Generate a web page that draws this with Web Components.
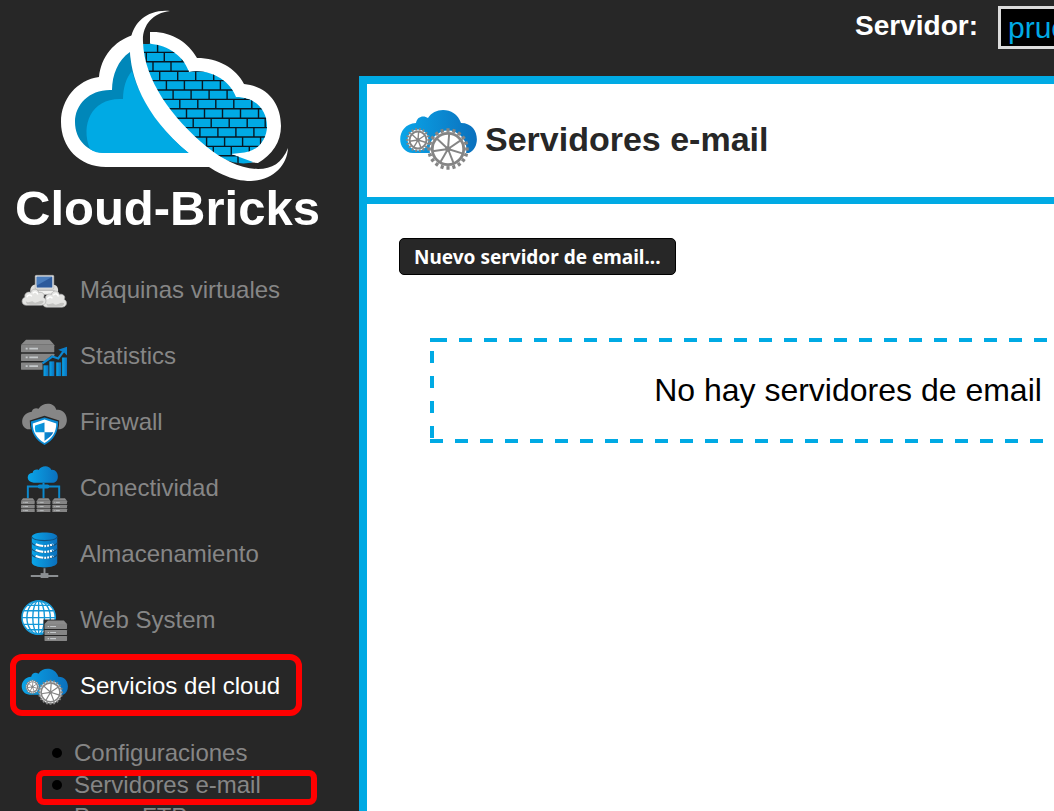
<!DOCTYPE html>
<html lang="es">
<head>
<meta charset="utf-8">
<title>Cloud-Bricks</title>
<style>
  html, body { margin: 0; height: 100%; }
  body { overflow: hidden; background: #272727; font-family: "Liberation Sans", Arial, sans-serif; }
</style>
</head>
<body>
<cb-app>
  <cb-sidebar slot="side">
    <cb-nav-item icon="vm">Máquinas virtuales</cb-nav-item>
    <cb-nav-item icon="stats">Statistics</cb-nav-item>
    <cb-nav-item icon="firewall">Firewall</cb-nav-item>
    <cb-nav-item icon="net">Conectividad</cb-nav-item>
    <cb-nav-item icon="storage">Almacenamiento</cb-nav-item>
    <cb-nav-item icon="web">Web System</cb-nav-item>
    <cb-nav-item icon="services" active>Servicios del cloud</cb-nav-item>
    <cb-sub-item slot="sub">Configuraciones</cb-sub-item>
    <cb-sub-item slot="sub" marked>Servidores e-mail</cb-sub-item>
    <cb-sub-item slot="sub">Proxy FTP</cb-sub-item>
  </cb-sidebar>
  <cb-server-bar slot="top"></cb-server-bar>
  <cb-panel slot="main">
    <span slot="title">Servidores e-mail</span>
    <cb-button>Nuevo servidor de email...</cb-button>
    <cb-empty>No hay servidores de email</cb-empty>
  </cb-panel>
</cb-app>

<script>
const gear = (cx, cy, r, teeth, spokes, color, sw) => {
  let s = `<circle cx="${cx}" cy="${cy}" r="${r}" fill="#fff"/><g stroke="${color}" fill="none">`;
  s += `<circle cx="${cx}" cy="${cy}" r="${r - sw}" stroke-width="${sw}"/>`;
  const ray = (a, r1, r2, w) =>
    `<path stroke-width="${w}" d="M${(cx + r1 * Math.cos(a)).toFixed(2)} ${(cy + r1 * Math.sin(a)).toFixed(2)}L${(cx + r2 * Math.cos(a)).toFixed(2)} ${(cy + r2 * Math.sin(a)).toFixed(2)}"/>`;
  for (let i = 0; i < teeth; i++) s += ray(i * 2 * Math.PI / teeth, r - sw / 2, r + sw * 0.8, r * 0.17);
  for (let i = 0; i < spokes; i++) s += ray(0.3 + i * 2 * Math.PI / spokes, 0, r - sw, sw * 0.7);
  return s + `</g><circle cx="${cx}" cy="${cy}" r="${sw}" fill="${color}"/>`;
};

const blueGrad = `<defs><linearGradient id="b" x1="0" x2="1"><stop offset="0" stop-color="#0aa5e8"/><stop offset="1" stop-color="#0b70bd"/></linearGradient></defs>`;

const rack = (x, y, w, h) => {
  const rh = (h * 0.84) / 3, top = y + h * 0.16;
  let s = `<path d="M${x} ${top}L${x + w * 0.15} ${y}H${x + w * 0.86}L${x + w} ${top}Z" fill="#8b8b8b"/>`;
  for (let i = 0; i < 3; i++) {
    s += `<rect x="${x}" y="${top + i * rh}" width="${w}" height="${rh * 0.84}" rx=".5" fill="#858585"/>`;
    s += `<path d="M${x + w * 0.14} ${top + (i + 0.42) * rh}h${w * 0.06}m${w * 0.05} 0h${w * 0.26}" stroke="#c4c8ca" stroke-width="${rh * 0.2}"/>`;
  }
  return s;
};

const puff = (x, y) => `<g transform="translate(${x} ${y})"><path d="M4 17C-1 17-1 10 3 9C2 4 7 3 9 4C10-1 17 0 17 4C21 3 24 6 22 9C26 11 25 17 20 17Z" fill="#e4e4e2" stroke="#aaa" stroke-width=".7"/><path d="M4 13C7 16 10 11 12 14C15 16 18 11 22 13C22 16 19 16.500 12 16.500C8 16.500 4 17 4 13Z" fill="#c3c3c1"/><path d="M5 9c1-3 4-3 5-1m1-3c2-3 5-1 5 1" stroke="#fff" fill="none" stroke-width="1.500"/></g>`;

const ICONS = {
  vm: `<svg viewBox="0 0 48 48"><path d="M10 28C8 21 12 17 16 18H33C38 18 39 24 37 28Z" fill="#dededc"/><rect x="14.500" y="8.500" width="19" height="14" rx="1" fill="#e9e9e7" stroke="#aaa" stroke-width=".6"/><rect x="16" y="10" width="16" height="11" fill="#2c5a9c"/><path d="M16 10H32L16 19Z" fill="#4a7dbd"/><path d="M13 24H34L37 28H12Z" fill="#f1f1ef" stroke="#999" stroke-width=".5"/>${puff(22, 24)}${puff(1, 22)}</svg>`,
  stats: `<svg viewBox="0 0 48 48">${blueGrad}${rack(0, 7, 34, 32)}<path d="M22 43V31L31 23L38 26L46 15V43Z" fill="#272727"/><g fill="url(#b)"><rect x="23" y="33" width="5" height="11"/><rect x="29" y="29" width="5" height="15"/><rect x="36" y="30" width="5" height="14"/><rect x="42" y="25" width="5" height="19"/></g><path d="M22 31L32 24L38 26L44 18" stroke="#0c88d2" stroke-width="2.200" fill="none"/><path d="M38 17L47 14V23L44 20Z" fill="#0c7fca"/></svg>`,
  firewall: `<svg viewBox="0 0 48 48">${blueGrad}<path d="M8 31C-2 30-1 14 11 13C12 9 16 9 18 10C22 3 34 3 36 11C48 9 51 28 40 31Z" fill="#868686"/><path d="M24 17L39 22C39 36 34 43 24 48C14 43 9 36 9 22Z" fill="#272727"/><path d="M24 19L38 23C38 35 33 42 24 47C15 42 10 35 10 23Z" fill="#0c8bd4"/><path d="M24 21L36 25C36 34 32 40 24 45C16 40 12 34 12 25Z" fill="#fff"/><path d="M24 24V34H15C14 31 14 29 14.500 27Z M24 34H33C32 37 28 40 24 43Z" fill="url(#b)"/></svg>`,
  net: `<svg viewBox="0 0 48 48">${blueGrad}<path d="M13 18C5 18 5 8 12 8C12 5 16 4 18 5C21 0 29 0 31 5C39 4 40 18 33 18Z" fill="url(#b)"/><path d="M23 18V34M7 34V22H39V34" stroke="#0c89cd" stroke-width="2" fill="none"/><rect x="17" y="20" width="12" height="4" rx="2" fill="#0b86ca"/>${rack(0, 34, 14, 15)}${rack(16, 34, 14, 15)}${rack(32, 34, 15, 15)}</svg>`,
  storage: `<svg viewBox="0 0 48 48">${blueGrad}<path d="M11 6C11 0 37 0 37 6V32C37 39 11 39 11 32Z" fill="url(#b)"/><path d="M11 6C13 11 35 11 37 6M11 12C13 17 35 17 37 12M11 18C13 23 35 23 37 18M11 24C13 29 35 29 37 24" stroke="#12517e" stroke-width="1.200" fill="none"/><path d="M15 13.500C21 16 27 16 33 13.500M15 19.500C21 22 27 22 33 19.500M15 25.500C21 28 27 28 33 25.500" stroke="#fff" stroke-width="2.200" fill="none" stroke-dasharray="8 1 2 1 2 1 2 1"/><path d="M24 38V44M10 46H38" stroke="#8b8f92" stroke-width="2"/><rect x="20" y="43" width="8" height="5" fill="#8b8f92"/></svg>`,
  web: `<svg viewBox="0 0 48 48"><circle cx="18" cy="21" r="17" fill="#fff" stroke="#1a9fdd" stroke-width="1.600"/><g stroke="#1598d8" stroke-width="1.400" fill="none"><ellipse cx="18" cy="21" rx="6" ry="17"/><ellipse cx="18" cy="21" rx="12" ry="17"/><path d="M18 4V38M1 21H35M3 14H33M3 28H33M7 8.500H29M7 33.500H29"/></g><rect x="23" y="23" width="25" height="22" fill="#272727"/>${rack(24, 24, 23, 22)}</svg>`,
  services: `<svg viewBox="0 0 78 64">${blueGrad}<path d="M14 46C-4 45-3 17 17 16C18 9 25 8 29 11C36-1 57 0 62 16C81 16 82 41 70 46Z" fill="url(#b)"/>${gear(19, 33, 10.5, 18, 7, "#858585", 2)}${gear(49, 42, 18.5, 20, 7, "#858585", 2.8)}</svg>`
};

const bricks = () => {
  let s = "";
  for (let k = 0; k < 14; k++) {
    const y = 43 + 9.4 * k;
    s += `<path d="M130 ${y.toFixed(1)}H290"/>`;
    for (let j = -8; j < 10; j++) s += `<path d="M${(157.6 + 6.7 * k + 18 * j).toFixed(1)} ${y.toFixed(1)}v9.4"/>`;
  }
  return s;
};

const LOGO = `<svg viewBox="0 0 350 186" role="img" aria-label="Cloud-Bricks">
<defs><clipPath id="wall"><path d="M142 44C161 42 182 52 189 72C209 68 230 80 236 97C255 97 267 110 267 126C267 141 256 153 240 153L231 154L253 162C238 167 218 158 205 150C176 130 146 95 142 44Z"/></clipPath></defs>
<path fill="#fff" d="M106 167C79 167 61 147 61 122C61 99 77 80 99 77C101 57 114 41 133 35L150 100L212 167Z"/>
<path fill="#fff" d="M150 32C171 31 188 42 197 58C218 58 236 68 244 84C267 86 281 103 281 126C281 142 272 155 258 163L225 160L150 60Z"/>
<path fill="#0087b9" d="M106 153C88 153 75 140 75 122C75 104 90 89 112 90C112 75 118 60 130 52C134 88 160 130 189 153Z"/>
<path fill="#00aae4" d="M90 149C80 124 92 97 123 99C123 88 126 78 132 71C140 100 163 132 189 153H106C98 153 94 152 90 149Z"/>
<g clip-path="url(#wall)"><rect x="130" y="40" width="150" height="130" fill="#00aae4"/><g stroke="#071722" stroke-width="1.400">${bricks()}</g></g>
<path fill="#272727" d="M142 44C142 36 144 31 150 28L149 44Z"/>
<path fill="#fff" d="M170 11C148 9 134 22 131 38C127 60 134 108 189 153C215 173 232 181 251 181C273 180 287 166 288 148C282 163 272 169 258 169C240 169 222 159 207 147C172 118 144 80 143 42C142 26 152 13 170 11Z"/>
</svg>`;

function define(name, css, html, setup) {
  const template = document.createElement("template");
  template.innerHTML = `<style>*,::before,::after,:host::after{box-sizing:border-box}${css}</style>${html}`;
  customElements.define(name, class extends HTMLElement {
    constructor() {
      super();
      this.attachShadow({ mode: "open" }).append(template.content.cloneNode(true));
    }
    connectedCallback() { if (setup) setup(this, this.shadowRoot); }
  });
}

define("cb-app", `
  :host { display: grid; grid-template-columns: 359px minmax(978px, 1fr); grid-template-rows: 76px 1fr; min-height: 100vh; background: #272727; }
  aside { grid-row: 1 / 3; }
  aside, header, main { min-width: 0; }
  main { display: grid; }`,
  `<aside><slot name="side"></slot></aside><header><slot name="top"></slot></header><main><slot name="main"></slot></main>`);

define("cb-sidebar", `
  :host { display: block; }
  .logo svg { display: block; width: 350px; height: 186px; }
  .name { margin-top: -8px; padding-left: 15px; font-size: 49px; line-height: 60px; font-weight: bold; color: #fff; }
  nav { padding-top: 19px; }
  .sub { padding-top: 18px; }`,
  `<div class="logo">${LOGO}</div><div class="name">Cloud-Bricks</div>
   <nav><slot></slot><div class="sub" role="list"><slot name="sub"></slot></div></nav>`);

define("cb-nav-item", `
  :host { display: block; position: relative; }
  a { display: flex; align-items: center; gap: 12px; height: 66px; padding-left: 21px; color: #868686; font-size: 24px; text-decoration: none; }
  :host([active]) a { color: #fff; }
  :host([active])::after { content: ""; position: absolute; left: 10px; top: 1px; width: 292px; height: 62px; border: 6px solid #f00; border-radius: 12px; pointer-events: none; }
  .icon { display: flex; width: 47px; height: 48px; align-items: center; }
  svg { display: block; width: 100%; }`,
  `<a href="#"><span class="icon"></span><slot></slot></a>`,
  (host, root) => { root.querySelector(".icon").innerHTML = ICONS[host.getAttribute("icon")]; });

define("cb-sub-item", `
  :host { display: block; position: relative; }
  a { display: flex; align-items: center; gap: 12px; height: 32px; padding-left: 52px; color: #868686; font-size: 24px; text-decoration: none; }
  a::before { content: ""; width: 10px; height: 10px; border-radius: 50%; background: #000; }
  :host([marked])::after { content: ""; position: absolute; left: 36px; top: 1px; width: 281px; height: 35px; border: 6px solid #f00; border-radius: 8px; pointer-events: none; }`,
  `<a href="#"><slot></slot></a>`,
  host => host.setAttribute("role", "listitem"));

define("cb-server-bar", `
  :host { display: flex; justify-content: flex-end; align-items: flex-start; gap: 20px; padding: 6px 40px 0 0; }
  label { font-size: 28px; line-height: 40px; font-weight: bold; color: #fff; }
  select { appearance: none; width: 299px; height: 43px; margin: 0; padding: 0 7px; border: 3px solid #dcdcdc; border-radius: 0; background: #000; color: #00aae4; font: 30px "Liberation Sans", Arial, sans-serif; }`,
  `<label for="server">Servidor:</label><select id="server"><option>prueba</option></select>`);

define("cb-panel", `
  :host { display: block; border: 8px solid #00aae4; border-bottom: 0; background: #fff; }
  header { display: flex; align-items: center; gap: 8px; height: 120px; padding: 0 32px 4px; border-bottom: 7px solid #00aae4; }
  svg { display: block; width: 78px; height: 64px; }
  h1 { margin: 0; font-size: 34px; line-height: 40px; font-weight: bold; color: #272727; }
  section { padding: 34px 32px; }`,
  `<header>${ICONS.services}<h1><slot name="title"></slot></h1></header><section><slot></slot></section>`);

define("cb-button", `
  :host { display: block; }
  button { display: block; height: 37px; padding: 0 14px; border: 1px solid #000; border-radius: 5px; background: #272727; color: #fff; font: bold 19px "Noto Sans", "Open Sans", sans-serif; }`,
  `<button type="button"><slot></slot></button>`);

define("cb-empty", `
  :host { display: grid; place-items: center; height: 105px; margin: 63px 31px 0; font-size: 32px; color: #000;
    --c: #00aae4;
    background:
      repeating-linear-gradient(90deg, transparent 0 4px, var(--c) 4px 17px, transparent 17px 25px) 0 0 / 100% 4px no-repeat,
      repeating-linear-gradient(90deg, var(--c) 0 13px, transparent 13px 25px) 0 100% / 100% 4px no-repeat,
      repeating-linear-gradient(180deg, transparent 0 13px, var(--c) 13px 25px) 0 0 / 4px 100% no-repeat,
      repeating-linear-gradient(180deg, transparent 0 13px, var(--c) 13px 25px) 100% 0 / 4px 100% no-repeat,
      linear-gradient(var(--c), var(--c)) 0 0 / 4px 4px no-repeat; }
  p { margin: 0; }`,
  `<p><slot></slot></p>`);
</script>
</body>
</html>
